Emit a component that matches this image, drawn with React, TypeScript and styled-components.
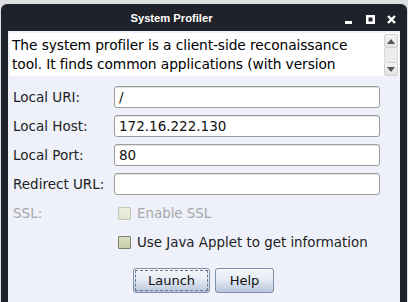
import React from "react";
import styled, { createGlobalStyle } from "styled-components";

const Global = createGlobalStyle`
  html, body { margin: 0; padding: 0; }
  body { background: #dedfe0; width: 408px; height: 302px; overflow: hidden; font-family: "DejaVu Sans", sans-serif; }
`;

const Window = styled.div`
  margin: 4px 1px 0 1px;
  height: 298px;
  background: #1f222a;
  border-radius: 6px 6px 0 0;
  display: flex;
  flex-direction: column;
  padding: 0 7px 0 7px;
  box-sizing: border-box;
`;

const TitleBar = styled.div`
  height: 27px;
  display: flex;
  align-items: center;
`;

const Title = styled.div`
  flex: 1;
  text-align: center;
  color: #ffffff;
  font-family: "Liberation Sans", sans-serif;
  font-weight: bold;
  font-size: 11.2px;
  padding: 1px 10px 0 0;
`;

const Controls = styled.div`
  display: flex;
  gap: 12px;
  padding: 3px 4px 0 0;
`;

const Content = styled.div`
  flex: 1;
  background: #eef1f9;
  padding: 2px 1px 0 2px;
  display: flex;
  flex-direction: column;
`;

const InfoBox = styled.div`
  height: 43px;
  background: #ffffff;
  display: flex;
  overflow: hidden;
`;

const InfoText = styled.div`
  flex: 1;
  padding: 3px 28px 0 2px;
  font-size: 13.8px;
  letter-spacing: -0.1px;
  line-height: 19px;
  color: #000;
`;

const ScrollBar = styled.div`
  width: 14px;
  margin: 1px 1px 0 0;
  display: flex;
  flex-direction: column;
`;

const ScrollBtn = styled.div`
  height: 14px;
  background: linear-gradient(#f4f4f4, #e2e2e2);
  border: 1px solid #d0d0d0;
  border-radius: 2px;
  box-sizing: border-box;
  display: flex;
  align-items: center;
  justify-content: center;
`;

const ScrollTrack = styled.div`
  flex: 1;
  background: #ececec;
  border-left: 1px solid #dcdcdc;
  border-right: 1px solid #dcdcdc;
`;

const Form = styled.div`
  display: flex;
  flex-direction: column;
  gap: 7px;
  padding: 10px 0 0 3px;
`;

const Row = styled.div`
  display: flex;
  align-items: center;
  height: 22px;
`;

const Label = styled.div<{ $disabled?: boolean }>`
  width: 101px;
  flex: none;
  font-size: 13.5px;
  color: ${(p) => (p.$disabled ? "#a8a8a8" : "#222")};
`;

const Field = styled.div`
  width: 266px;
  height: 22px;
  box-sizing: border-box;
  border: 1px solid #9c9c9c;
  border-radius: 3px;
  background: #fff;
  font-size: 13.5px;
  padding: 2px 0 0 4px;
  color: #111;
  box-shadow: inset 0 1px 0 #e4e4e4;
`;

const Box = styled.div<{ $disabled?: boolean }>`
  width: 13px;
  height: 13px;
  box-sizing: border-box;
  border: 1px solid ${(p) => (p.$disabled ? "#c3c4b6" : "#80806a")};
  background: ${(p) =>
    p.$disabled
      ? "linear-gradient(#eceee0, #e2e4d2)"
      : "linear-gradient(#dcdfc4, #c9ccaa)"};
  border-radius: 1px;
  margin: 0 6px 0 4px;
`;

const CheckText = styled.span<{ $disabled?: boolean }>`
  font-size: 13.4px;
  color: ${(p) => (p.$disabled ? "#a8a8a8" : "#222")};
`;

const Buttons = styled.div`
  display: flex;
  gap: 5px;
  padding: 15px 0 0 123px;
`;

const Button = styled.button<{ $w: number; $focus?: boolean }>`
  width: ${(p) => p.$w}px;
  height: 25px;
  font-family: "DejaVu Sans", sans-serif;
  font-size: 13px;
  color: #111;
  border: 1px solid #7f8fa8;
  border-radius: 3px;
  background: linear-gradient(#f5f7fb 0%, #e6ebf4 45%, #b8c6dc 100%);
  padding: 0;
  outline: ${(p) => (p.$focus ? "1px dashed #6c7890" : "none")};
  outline-offset: -3px;
`;

const Arrow = ({ up }: { up?: boolean }) => (
  <svg width="8" height="5" viewBox="0 0 8 5">
    <path d={up ? "M0 5 L4 0 L8 5 Z" : "M0 0 L4 5 L8 0 Z"} fill="#555" />
  </svg>
);

export default function App() {
  return (
    <>
      <Global />
      <Window>
        <TitleBar>
          <Title>System Profiler</Title>
          <Controls>
            <svg width="9" height="9" viewBox="0 0 9 9">
              <rect x="0" y="6" width="7" height="3" fill="#fff" />
            </svg>
            <svg width="9" height="9" viewBox="0 0 9 9">
              <rect x="1.25" y="1.25" width="6.5" height="6.5" fill="none" stroke="#fff" strokeWidth="2.5" />
            </svg>
            <svg width="9" height="9" viewBox="0 0 9 9">
              <path d="M1 1 L8 8 M8 1 L1 8" stroke="#fff" strokeWidth="2.4" />
            </svg>
          </Controls>
        </TitleBar>
        <Content>
          <InfoBox>
            <InfoText>
              The system profiler is a client-side reconaissance tool. It finds common applications (with version
              numbers) used by the user.
            </InfoText>
            <ScrollBar>
              <ScrollBtn>
                <Arrow up />
              </ScrollBtn>
              <ScrollTrack />
              <ScrollBtn>
                <Arrow />
              </ScrollBtn>
            </ScrollBar>
          </InfoBox>
          <Form>
            <Row>
              <Label>Local URI:</Label>
              <Field>/</Field>
            </Row>
            <Row>
              <Label>Local Host:</Label>
              <Field>172.16.222.130</Field>
            </Row>
            <Row>
              <Label>Local Port:</Label>
              <Field>80</Field>
            </Row>
            <Row>
              <Label>Redirect URL:</Label>
              <Field />
            </Row>
            <Row>
              <Label $disabled>SSL:</Label>
              <Box $disabled />
              <CheckText $disabled>Enable SSL</CheckText>
            </Row>
            <Row>
              <Label />
              <Box />
              <CheckText>Use Java Applet to get information</CheckText>
            </Row>
          </Form>
          <Buttons>
            <Button $w={77} $focus>Launch</Button>
            <Button $w={59}>Help</Button>
          </Buttons>
        </Content>
      </Window>
    </>
  );
}
